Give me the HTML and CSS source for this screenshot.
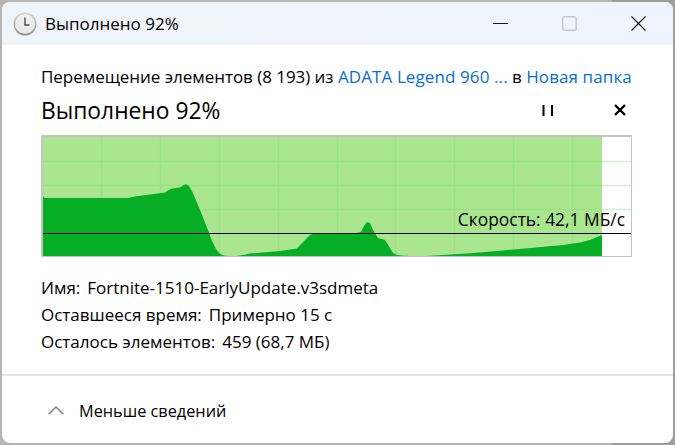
FILE: index.html
```html
<!DOCTYPE html>
<html lang="ru">
<head>
<meta charset="utf-8">
<title>Выполнено 92%</title>
<link rel="stylesheet" href="styles.css">
</head>
<body>
<div class="window">
  <header class="titlebar">
    <svg class="clock" width="24" height="24" viewBox="0 0 24 24">
      <defs>
        <linearGradient id="rim" x1="0" y1="0" x2="0" y2="1"><stop offset="0" stop-color="#d4d4d4"/><stop offset="1" stop-color="#8f8f8f"/></linearGradient>
        <linearGradient id="face" x1="0" y1="0" x2="0" y2="1"><stop offset="0" stop-color="#f2f2f2"/><stop offset="1" stop-color="#e6e6e6"/></linearGradient>
      </defs>
      <circle cx="12" cy="12" r="11.5" fill="url(#rim)"/>
      <circle cx="12" cy="12" r="10" fill="url(#face)"/>
      <path d="M12 5.5V13H16.5" fill="none" stroke="#4a4a4a" stroke-width="1.4"/>
    </svg>
    <span class="title">Выполнено 92%</span>
    <div class="controls">
      <svg class="ctl" width="15" height="15" viewBox="0 0 15 15"><path d="M0 7.5H15" stroke="#1a1a1a" stroke-width="1"/></svg>
      <svg class="ctl" width="15" height="15" viewBox="0 0 15 15"><rect x=".75" y=".75" width="13.5" height="13.5" rx="2" fill="none" stroke="#c6c8cb" stroke-width="1.5"/></svg>
      <svg class="ctl" width="15" height="15" viewBox="0 0 15 15"><path d="M.5 .5L14.5 14.5M14.5 .5L.5 14.5" stroke="#1a1a1a" stroke-width="1.2"/></svg>
    </div>
  </header>
  <main class="content">
    <p class="summary">Перемещение элементов (8 193) из <a>ADATA Legend 960 ...</a> в <a>Новая папка</a></p>
    <div class="progress-head">
      <h1>Выполнено 92%</h1>
      <div class="actions">
        <svg width="11" height="12" viewBox="0 0 11 12"><path d="M1.500 1V12M10 1V12" stroke="#000" stroke-width="2"/></svg>
        <svg width="12" height="12" viewBox="0 0 12 12"><path d="M1 1L11 11M11 1L1 11" stroke="#000" stroke-width="2.4"/></svg>
      </div>
    </div>
    <div class="chart">
      <svg width="588" height="119" viewBox="43 137 588 119">
        <rect x="43" y="137" width="559" height="119" fill="#a9e68f"/>
        <path d="M602 161.500H631M602 185.500H631M602 209.500H631" stroke="#d2f0cb" stroke-width="1.5"/>
        <path d="M43 161.500H602M43 185.500H602M43 209.500H602M101.500 137V256M160.500 137V256M219.500 137V256M278.500 137V256M337.500 137V256M395.500 137V256M454.500 137V256M513.500 137V256M572.500 137V256" stroke="#9ae285" stroke-width="1.5"/>
        <path d="M43 256V196L44.500 198H128L135 196.500L150 194.500L165 192.500L168 190.500L172 188.500L180 187.500L184 185L186 184L189 186L192 191L200 210L208 230L212 241L216 249L220 254L224 255.500L230 256H236L246 254.500L250 253.500L280 251L297 248.500L305 240L310 235L313 234H350L361 232L364 226L367 222L370 223L373 230L378 238L385 240L390 248L393 253L397 255L404 255.700L410 256H426L443 255L467 253.500L497 251L530 248L563 245L580 242.500L590 240L602 235V256Z" fill="#05ae24"/>
        <path d="M43 233.500H631" stroke="#000" stroke-width="1"/>
      </svg>
      <span class="speed">Скорость: 42,1 МБ/с</span>
    </div>
    <dl class="details">
      <div class="row"><dt>Имя:</dt><dd>Fortnite-1510-EarlyUpdate.v3sdmeta</dd></div>
      <div class="row"><dt>Оставшееся время:</dt><dd>Примерно 15 с</dd></div>
      <div class="row"><dt>Осталось элементов:</dt><dd>459 (68,7 МБ)</dd></div>
    </dl>
  </main>
  <footer class="footer">
    <svg width="16" height="9" viewBox="0 0 16 9"><path d="M.7 8.300L8 1L15.300 8.300" fill="none" stroke="#7d7d7d" stroke-width="1.4"/></svg>
    <span>Меньше сведений</span>
  </footer>
</div>
</body>
</html>
```
FILE: styles.css
```css
* { box-sizing: border-box; }
html, body { margin: 0; height: 100%; }
body {
  width: 675px;
  height: 445px;
  padding: 2px;
  overflow: hidden;
  background: linear-gradient(90deg, #b4b4b4 0, #b4b4b4 612px, #9e9e9e 612px);
  font-family: "Open Sans", "Noto Sans", sans-serif;
  font-size: 17px;
  color: #000;
}
.window {
  width: 671px;
  height: 441px;
  display: flex;
  flex-direction: column;
  background: #fff;
  border-radius: 8px;
  overflow: hidden;
}
.titlebar {
  height: 43px;
  flex: none;
  display: flex;
  align-items: center;
  padding-left: 11px;
  background: linear-gradient(90deg, #eff4f8, #eff3fb);
}
.clock { margin-right: 8px; }
.title { font-size: 17px; }
.controls {
  margin-left: auto;
  display: flex;
  gap: 54px;
  padding-right: 27px;
}
.ctl { display: block; }
.content {
  flex: 1;
  padding: 22px 0 0 39px;
  display: flex;
  flex-direction: column;
}
.summary { margin: 0; line-height: 20px; white-space: nowrap; letter-spacing: -0.04px; }
.summary a { color: #0a6ed1; letter-spacing: 0.1px; }
.progress-head {
  display: flex;
  align-items: center;
  justify-content: space-between;
  width: 585px;
  height: 36px;
  margin-top: 5px;
}
h1 { margin: 0; font-size: 22.8px; font-weight: 400; }
.actions { display: flex; align-items: center; gap: 61px; }
.actions svg { display: block; }
.chart {
  position: relative;
  width: 591px;
  height: 122px;
  margin-top: 7px;
  border: 2px solid #c4c4c4;
  border-right-width: 1px;
  border-bottom-width: 1px;
  background: #fff;
}
.chart svg { display: block; }
.speed {
  position: absolute;
  right: 6px;
  top: 72px;
  font-size: 17.4px;
  line-height: 20px;
  white-space: nowrap;
}
.details { margin: 17px 0 0; }
.row { display: flex; gap: 7px; height: 27px; align-items: center; }
dt, dd { margin: 0; white-space: nowrap; }
.footer {
  height: 69px;
  flex: none;
  border-top: 2px solid #e4e4e4;
  display: flex;
  align-items: center;
  gap: 15px;
  padding: 2px 0 0 46px;
  font-size: 16.3px;
}
```
